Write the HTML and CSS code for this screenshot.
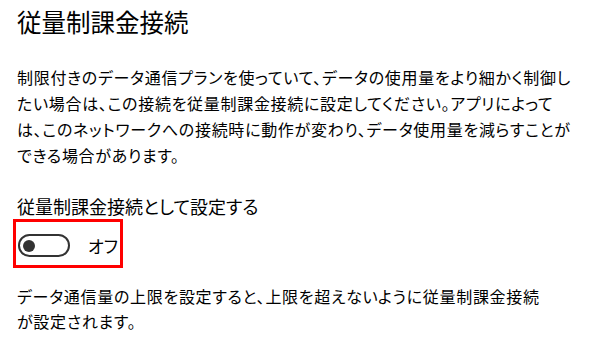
FILE: index.html
```html
<!DOCTYPE html>
<html lang="ja">
<head>
    <meta charset="UTF-8">
    <meta name="viewport" content="width=device-width, initial-scale=1.0">
    <title>従量制課金接続</title>
    <link rel="stylesheet" href="styles.css">
</head>
<body>
    <h1 class="title">従量制課金接続</h1>

    <p class="desc">
        制限付きのデータ通信プランを使っていて、データの使用量をより細かく制御し<br>
        たい場合は、この接続を従量制課金接続に設定してください。アプリによって<br>
        は、このネットワークへの接続時に動作が変わり、データ使用量を減らすことが<br>
        できる場合があります。
    </p>

    <div class="setting">
        <div class="setting-label">従量制課金接続として設定する</div>
        <div class="highlight">
            <span class="toggle"><span class="knob"></span></span>
            <span class="toggle-state">オフ</span>
        </div>
    </div>

    <p class="desc desc-bottom">
        データ通信量の上限を設定すると、上限を超えないように従量制課金接続<br>
        が設定されます。
    </p>
</body>
</html>
```

FILE: styles.css
```css
/* 設定ページ */
body {
    margin: 0;
    padding: 0 17px;
    background-color: #ffffff;
    color: #000000;
    font-family: 'Noto Sans CJK JP', 'Noto Sans', sans-serif;
    font-feature-settings: "palt";
}

.title {
    margin: 6px 0 0;
    font-size: 24.5px;
    font-weight: 400;
    line-height: 32px;
}

.desc {
    margin: 26px 0 0;
    font-size: 16px;
    letter-spacing: 0.7px;
    line-height: 26px;
    white-space: nowrap;
}

.desc-bottom {
    margin-top: 16px;
    line-height: 25px;
}

.setting {
    margin-top: 25px;
}

.setting-label {
    font-size: 18px;
    line-height: 26px;
}

.highlight {
    display: flex;
    align-items: center;
    width: 102px;
    height: 43px;
    margin-left: -4px;
    padding-left: 2px;
    border: 3px solid #ff0000;
}

.toggle {
    display: flex;
    align-items: center;
    box-sizing: border-box;
    width: 52px;
    height: 23px;
    margin-top: 4px;
    padding-left: 3px;
    border: 2px solid #333333;
    border-radius: 12px;
}

.knob {
    width: 12px;
    height: 12px;
    border-radius: 50%;
    background-color: #333333;
}

.toggle-state {
    margin: 4px 0 0 18px;
    font-size: 17px;
}
```
